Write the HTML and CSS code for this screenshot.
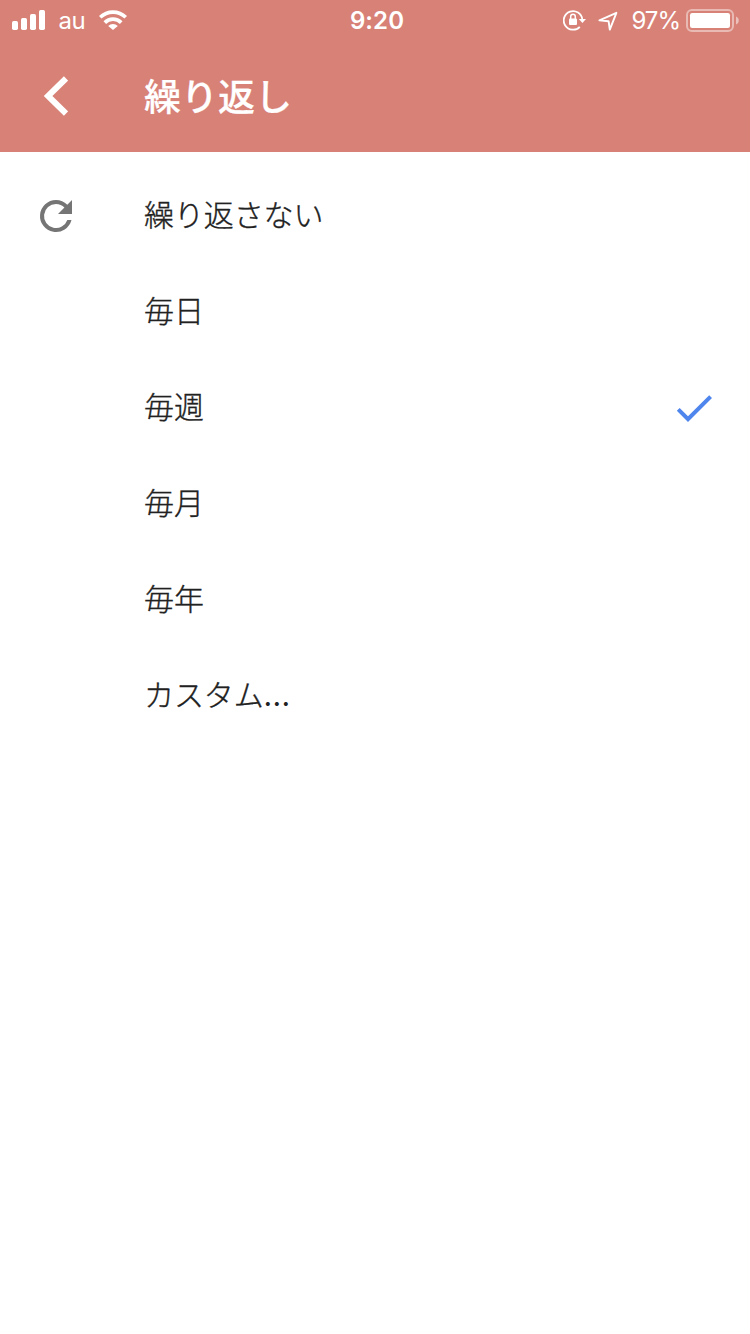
FILE: index.html
```html
<!DOCTYPE html>
<html lang="ja">
<head>
<meta charset="utf-8">
<title>繰り返し</title>
<link rel="stylesheet" href="styles.css">
</head>
<body>
<header class="header">
  <div class="status">
    <div class="status-left">
      <svg class="signal" width="34" height="20" viewBox="0 0 34 20" fill="currentColor"><rect x="0" y="11" width="6" height="9" rx="1.7"/><rect x="9" y="8" width="6" height="12" rx="1.7"/><rect x="18" y="4" width="6" height="16" rx="1.7"/><rect x="27" y="0" width="6" height="20" rx="1.7"/></svg>
      <span class="carrier">au</span>
      <svg class="wifi" width="28" height="20" viewBox="0 0 28 20"><g fill="none" stroke="currentColor" stroke-width="3.7"><path d="M1.2 7.3a18.2 18.2 0 0 1 25.6 0"/><path d="M5.8 12.6a11.6 11.6 0 0 1 16.4 0"/></g><path d="M9.2 16a6.8 6.8 0 0 1 9.6 0L14 20z" fill="currentColor"/></svg>
    </div>
    <time class="clock">9:20</time>
    <div class="status-right">
      <svg class="lock" width="24" height="22" viewBox="0 0 24 22"><path d="M16.8 17.8A9.3 9.3 0 1 1 19.3 10.5" fill="none" stroke="currentColor" stroke-width="1.8"/><path d="M15.8 10h7.2l-3.6 4z" fill="currentColor"/><rect x="6" y="9.5" width="8" height="6.5" rx="1" fill="currentColor"/><path d="M7.7 10V7.5a2.3 2.3 0 0 1 4.6 0V10" fill="none" stroke="currentColor" stroke-width="1.5"/></svg>
      <svg class="location" width="20" height="20" viewBox="0 0 20 20"><path d="M1.4 9.4 18.4 1.8 11.8 18.6 10.6 10.2z" fill="none" stroke="currentColor" stroke-width="1.9" stroke-linejoin="round"/></svg>
      <span class="percent">97%</span>
      <svg class="battery" width="54" height="24" viewBox="0 0 54 24"><rect x="1" y="1" width="46" height="21" rx="5" fill="none" stroke="currentColor" stroke-width="2" opacity=".45"/><rect x="4" y="4" width="40" height="15" rx="2.2" fill="currentColor"/><path d="M50 7.5c3.7 1.3 3.7 6.7 0 8z" fill="currentColor" opacity=".5"/></svg>
    </div>
  </div>
  <nav class="navbar">
    <svg class="back" width="24" height="40" viewBox="0 0 24 40"><path d="M22 2.5 4 20 22 37.5" fill="none" stroke="currentColor" stroke-width="6"/></svg>
    <h1 class="title">繰り返し</h1>
  </nav>
</header>
<main class="options">
  <div class="row">
    <svg class="repeat" width="48" height="48" viewBox="0 0 24 24" fill="#757575"><path d="M17.65 6.35A7.96 7.96 0 0 0 12 4a8 8 0 1 0 7.75 10h-2.08A6 6 0 1 1 12 6c1.66 0 3.14.69 4.22 1.78L13 11h7V4z"/></svg>
    <span class="label">繰り返さない</span>
  </div>
  <div class="row"><span class="label">毎日</span></div>
  <div class="row">
    <span class="label">毎週</span>
    <svg class="check" width="48" height="48" viewBox="0 0 24 24" fill="#4f86ed"><path d="M9 16.17 4.83 12l-1.42 1.41L9 19 21 7l-1.41-1.41z"/></svg>
  </div>
  <div class="row"><span class="label">毎月</span></div>
  <div class="row"><span class="label">毎年</span></div>
  <div class="row"><span class="label">カスタム<span class="dots">...</span></span></div>
</main>
</body>
</html>
```

FILE: styles.css
```css
* { box-sizing: border-box; }
body {
  margin: 0;
  min-height: 1334px;
  background: #fff;
  color: #212121;
  font-family: Inter, "Noto Sans CJK JP", sans-serif;
}
svg { display: block; flex: none; }
.header { height: 152px; background: #d88177; color: #fff; }
.status {
  display: grid;
  grid-template-columns: 1fr auto 1fr;
  height: 40px;
  padding: 0 10px 0 12px;
  align-items: center;
  font-size: 24px;
  line-height: 40px;
}
.status-left, .status-right { display: flex; align-items: center; height: 40px; }
.status-right { justify-content: flex-end; }
.signal { margin-bottom: 1px; }
.carrier { margin: 1px 0 0 12.5px; letter-spacing: -.4px; }
.wifi { margin: 0 0 1px 14px; }
.clock { font-weight: 600; letter-spacing: .1px; padding: 1px 0 0 2px; }
.lock { margin-bottom: 2px; }
.location { margin-left: 11px; }
.percent { margin: 1px 0 0 13px; letter-spacing: -1px; }
.battery { margin-left: 6px; }
.navbar { display: flex; align-items: center; height: 112px; padding-left: 44px; }
.title {
  margin: 0 0 3px 76px;
  font: 500 37px/56px "Noto Sans CJK JP", sans-serif;
  -webkit-text-stroke: .2px currentColor;
}
.options { padding-top: 16px; }
.row {
  display: grid;
  grid-template-columns: 112px 1fr 48px;
  align-items: center;
  height: 96px;
  padding: 0 32px;
}
.label {
  grid-column: 2;
  padding-bottom: 6px;
  font: 300 30px/44px "Noto Sans CJK JP", sans-serif;
  letter-spacing: -.1px;
  -webkit-text-stroke: .35px currentColor;
}
.repeat { grid-column: 1; }
.check { grid-column: 3; }
.dots { font-family: Inter, sans-serif; font-weight: 400; letter-spacing: .3px; line-height: 1; -webkit-text-stroke: 0; }
```
